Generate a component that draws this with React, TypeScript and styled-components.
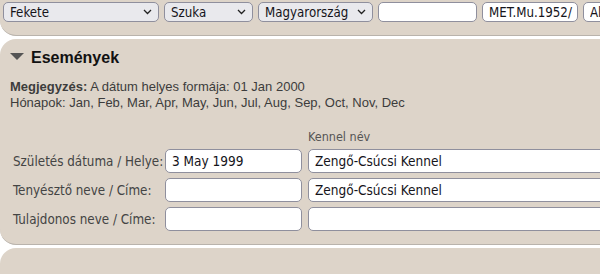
import styled, { createGlobalStyle } from "styled-components";

const GlobalStyle = createGlobalStyle`
  html, body {
    margin: 0;
    padding: 0;
    background: #ffffff;
    overflow: hidden;
  }
  body {
    font-family: "Liberation Sans", Arial, sans-serif;
  }
`;

const beige = "#ddd4c9";
const edge = "#b9b3ac";
const controlFont = `"DejaVu Sans Condensed", "DejaVu Sans", sans-serif`;

const Page = styled.div`
  display: flex;
  flex-direction: column;
  gap: 3px;
  width: 760px;
`;

const TopPanel = styled.div`
  height: 36px;
  box-sizing: border-box;
  background: ${beige};
  border-bottom: 1px solid ${edge};
  border-bottom-left-radius: 16px;
  padding: 2px 0 0 3px;
  display: flex;
  gap: 5px;
  align-items: flex-start;
`;

const SelectWrap = styled.div<{ $w: number }>`
  position: relative;
  width: ${(p) => p.$w}px;
  height: 20px;
`;

const Select = styled.select`
  appearance: none;
  width: 100%;
  height: 20px;
  box-sizing: border-box;
  margin: 0;
  padding: 0 18px 0 6px;
  border: 1px solid #8f8f9d;
  border-radius: 5px;
  background: #e9e9ed;
  color: #15141a;
  font-family: ${controlFont};
  font-size: 13.2px;
`;

const Chevron = styled.svg`
  position: absolute;
  right: 7px;
  top: 7px;
  pointer-events: none;
`;

const TextInput = styled.input<{ $w: number; $h?: number; $size?: number }>`
  width: ${(p) => p.$w}px;
  height: ${(p) => p.$h ?? 20}px;
  box-sizing: border-box;
  margin: 0;
  padding: 0 4px 0 6px;
  border: 1px solid #8f8f9d;
  border-radius: 5px;
  background: #ffffff;
  color: #15141a;
  font-family: ${controlFont};
  font-size: ${(p) => p.$size ?? 13.5}px;
`;

const Section = styled.div`
  background: ${beige};
  border-bottom: 1px solid ${edge};
  border-radius: 16px 0 0 16px;
  padding: 9px 0 13px 0;
`;

const Heading = styled.div`
  display: flex;
  align-items: center;
  gap: 7px;
  height: 20px;
  padding-left: 10px;
  font-size: 16px;
  font-weight: bold;
  color: #111;
`;

const Triangle = styled.svg`
  margin-bottom: 3px;
`;

const Note = styled.div`
  margin-top: 11px;
  padding-left: 10px;
  font-size: 13px;
  line-height: 16px;
  color: #3c3c3c;
`;

const Form = styled.div`
  margin-top: 19px;
  padding-left: 13px;
  display: grid;
  grid-template-columns: 146px 137px 420px;
  column-gap: 6px;
  row-gap: 5px;
  grid-template-rows: 14px repeat(3, 24px);
`;

const ColHead = styled.div<{ $col: number }>`
  grid-column: ${(p) => p.$col};
  font-family: ${controlFont};
  font-size: 12.5px;
  line-height: 14px;
  color: #555;
`;

const Label = styled.div`
  display: flex;
  align-items: center;
  font-family: ${controlFont};
  font-size: 13.3px;
  color: #444;
  white-space: nowrap;
`;

const BottomPanel = styled.div`
  height: 40px;
  background: ${beige};
  border-top-left-radius: 16px;
`;

const selects = [
  { w: 156, v: "Fekete" },
  { w: 89, v: "Szuka" },
  { w: 115, v: "Magyarország" },
];

const rows = [
  { label: "Születés dátuma / Helye:", a: "3 May 1999", b: "Zengő-Csúcsi Kennel" },
  { label: "Tenyésztő neve / Címe:", a: "", b: "Zengő-Csúcsi Kennel" },
  { label: "Tulajdonos neve / Címe:", a: "", b: "" },
];

export default function App() {
  return (
    <>
      <GlobalStyle />
      <Page>
        <TopPanel>
          {selects.map((s) => (
            <SelectWrap key={s.v} $w={s.w}>
              <Select defaultValue={s.v}>
                <option>{s.v}</option>
              </Select>
              <Chevron width="9" height="6" viewBox="0 0 9 6">
                <path d="M1 1 L4.5 4.5 L8 1" fill="none" stroke="#222" strokeWidth="1.3" />
              </Chevron>
            </SelectWrap>
          ))}
          <TextInput $w={99} $size={13.2} defaultValue="" />
          <TextInput $w={96} $size={13.2} defaultValue="MET.Mu.1952/" />
          <TextInput $w={60} $size={13.2} defaultValue="Alapítás" />
        </TopPanel>

        <Section>
          <Heading>
            <Triangle width="14" height="7" viewBox="0 0 14 7">
              <path d="M0 0 H14 L7 7 Z" fill="#555" />
            </Triangle>
            Események
          </Heading>
          <Note>
            <b>Megjegyzés:</b> A dátum helyes formája: 01 Jan 2000
            <br />
            Hónapok: Jan, Feb, Mar, Apr, May, Jun, Jul, Aug, Sep, Oct, Nov, Dec
          </Note>
          <Form>
            <ColHead $col={3}>Kennel név</ColHead>
            {rows.map((r) => (
              <>
                <Label key={r.label}>{r.label}</Label>
                <TextInput $w={137} $h={24} defaultValue={r.a} />
                <TextInput $w={420} $h={24} defaultValue={r.b} />
              </>
            ))}
          </Form>
        </Section>

        <BottomPanel />
      </Page>
    </>
  );
}
